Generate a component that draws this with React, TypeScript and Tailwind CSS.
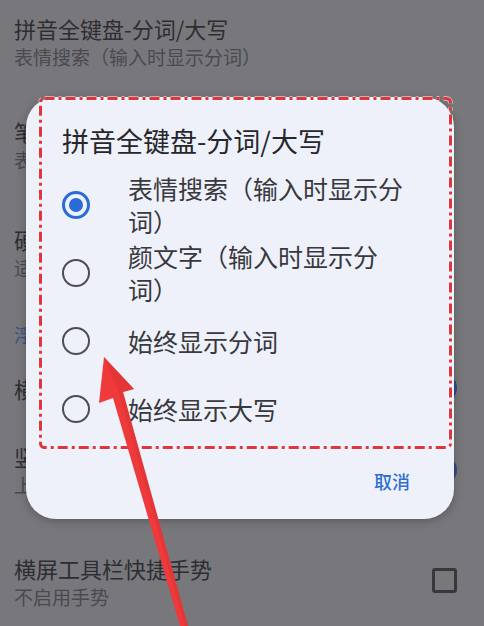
import React from 'react';

const options = [
  { label: '表情搜索（输入时显示分词）', checked: true },
  { label: '颜文字（输入时显示分词）', checked: false },
  { label: '始终显示分词', checked: false },
  { label: '始终显示大写', checked: false },
];

const font = { fontFamily: '"Noto Sans CJK SC", "Noto Sans", sans-serif' };

const Radio: React.FC<{ checked: boolean }> = ({ checked }) =>
  checked ? (
    <div className="w-[28px] h-[28px] shrink-0 rounded-full border-[3px] border-[#2b6bd6] flex items-center justify-center">
      <div className="w-[14px] h-[14px] rounded-full bg-[#2b6bd6]" />
    </div>
  ) : (
    <div className="w-[28px] h-[28px] shrink-0 rounded-full border-[2.5px] border-[#4d4d54]" />
  );

const App: React.FC = () => {
  return (
    <div className="relative w-[484px] h-[626px] overflow-hidden bg-[#78787c]" style={font}>
      {/* Settings list behind the dialog (dimmed) */}
      <div className="flex flex-col pl-[14px] pr-[27px]">
        <div className="pt-[13px]">
          <div className="text-[22px] leading-[30px] text-[#2e2e31]">拼音全键盘-分词/大写</div>
          <div className="text-[19px] leading-[28px] text-[#4a4a4e]">表情搜索（输入时显示分词）</div>
        </div>

        <div className="mt-[45px]">
          <div className="text-[22px] leading-[30px] text-[#2e2e31]">笔画输入方式</div>
          <div className="text-[19px] leading-[28px] text-[#4a4a4e]">表示笔画顺序</div>
        </div>

        <div className="mt-[50px]">
          <div className="text-[22px] leading-[30px] text-[#2e2e31]">硬键盘设置</div>
          <div className="text-[19px] leading-[28px] text-[#4a4a4e]">适用于外接键盘</div>
        </div>

        <div className="mt-[39px] text-[18px] leading-[26px] text-[#3b5283]">浮动键盘</div>

        <div className="mt-[20px] h-[42px] flex items-center justify-between">
          <div className="text-[22px] leading-[30px] text-[#2e2e31]">横屏时使用浮动键盘</div>
          <div className="w-[48px] h-[30px] rounded-full bg-[#2f4a86]" />
        </div>

        <div className="mt-[32px] flex items-center justify-between">
          <div>
            <div className="text-[22px] leading-[30px] text-[#2e2e31]">竖屏时使用浮动键盘</div>
            <div className="text-[19px] leading-[28px] text-[#4a4a4e]">上下滑动调整位置</div>
          </div>
          <div className="w-[48px] h-[28px] rounded-full bg-[#2f4a86]" />
        </div>

        <div className="mt-[54px] flex items-center justify-between">
          <div>
            <div className="text-[22px] leading-[30px] text-[#2e2e31]">横屏工具栏快捷手势</div>
            <div className="text-[19px] leading-[28px] text-[#4a4a4e]">不启用手势</div>
          </div>
          <div className="w-[25px] h-[25px] rounded-[3px] border-[3px] border-[#38383b] -mt-[4px]" />
        </div>
      </div>

      {/* Dialog */}
      <div className="absolute left-[26px] top-[97px] w-[428px] h-[422px] rounded-[30px] bg-[#eef1fa] shadow-[0_2px_10px_rgba(0,0,0,0.25)] pt-[26px] px-[36px]">
        <div className="text-[27px] leading-[36px] text-[#26262b] whitespace-nowrap">拼音全键盘-分词/大写</div>
        <div className="mt-[12px] flex flex-col">
          {options.map((o) => (
            <div key={o.label} className="min-h-[68px] flex items-center gap-[38px]">
              <Radio checked={o.checked} />
              <div className="w-[280px] text-[25px] leading-[33px] text-[#38383d]">{o.label}</div>
            </div>
          ))}
        </div>
        <div className="mt-[26px] flex justify-end pr-[8px]">
          <span className="text-[18px] leading-[24px] font-medium text-[#2f6fce]">取消</span>
        </div>
      </div>

      {/* Annotation: dash-dot frame and arrow */}
      <svg className="absolute inset-0 pointer-events-none" width="484" height="626" viewBox="0 0 484 626">
        <rect x="40.5" y="98.5" width="410" height="349" rx="4" fill="none" stroke="#ffffff" strokeOpacity="0.5" strokeWidth="5" strokeDasharray="10 4 3 4" />
        <rect x="40.5" y="98.5" width="410" height="349" rx="4" fill="none" stroke="#e3343a" strokeWidth="3" strokeDasharray="10 4 3 4" />
        <polygon points="104,357 134,389 123,392 188,626 180,626 113,398 99,403" fill="#ee3a3a" />
        <polygon points="104,357 134,389 123,392 188,626 185,626 119,393" fill="#d92f33" opacity="0.5" />
      </svg>
    </div>
  );
};

export default App;
